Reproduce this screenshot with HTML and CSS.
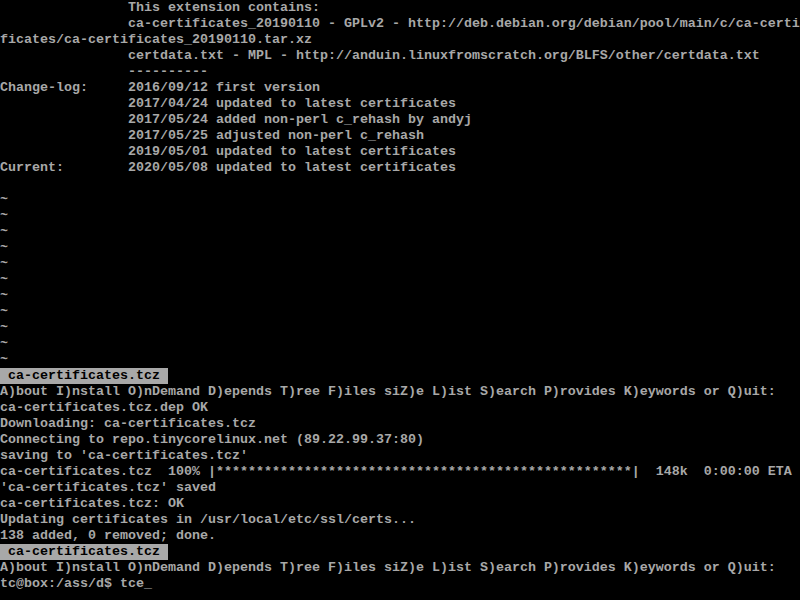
FILE: index.html
```html
<!DOCTYPE html>

<html lang="en">

<head>
  <meta charset="UTF-8">
  <meta name="viewport" content="width=device-width, initial-scale=1">

  <title>tty1</title>

  <link rel="stylesheet" href="styles.css">
</head>

<body>
  <div id="console">
    <div class="line">                This extension contains:</div>
    <div class="line">                ca-certificates_20190110 - GPLv2 - http://deb.debian.org/debian/pool/main/c/ca-certi</div>
    <div class="line">ficates/ca-certificates_20190110.tar.xz</div>
    <div class="line">                certdata.txt - MPL - http://anduin.linuxfromscratch.org/BLFS/other/certdata.txt</div>
    <div class="line">                ----------</div>
    <div class="line">Change-log:     2016/09/12 first version</div>
    <div class="line">                2017/04/24 updated to latest certificates</div>
    <div class="line">                2017/05/24 added non-perl c_rehash by andyj</div>
    <div class="line">                2017/05/25 adjusted non-perl c_rehash</div>
    <div class="line">                2019/05/01 updated to latest certificates</div>
    <div class="line">Current:        2020/05/08 updated to latest certificates</div>
    <div class="line"></div>
    <div class="line">~</div>
    <div class="line">~</div>
    <div class="line">~</div>
    <div class="line">~</div>
    <div class="line">~</div>
    <div class="line">~</div>
    <div class="line">~</div>
    <div class="line">~</div>
    <div class="line">~</div>
    <div class="line">~</div>
    <div class="line">~</div>
    <div class="line"><span class="status"> ca-certificates.tcz </span></div>
    <div class="line">A)bout I)nstall O)nDemand D)epends T)ree F)iles siZ)e L)ist S)earch P)rovides K)eywords or Q)uit:</div>
    <div class="line">ca-certificates.tcz.dep OK</div>
    <div class="line">Downloading: ca-certificates.tcz</div>
    <div class="line">Connecting to repo.tinycorelinux.net (89.22.99.37:80)</div>
    <div class="line">saving to 'ca-certificates.tcz'</div>
    <div class="line">ca-certificates.tcz  100% |****************************************************|  148k  0:00:00 ETA</div>
    <div class="line">'ca-certificates.tcz' saved</div>
    <div class="line">ca-certificates.tcz: OK</div>
    <div class="line">Updating certificates in /usr/local/etc/ssl/certs...</div>
    <div class="line">138 added, 0 removed; done.</div>
    <div class="line"><span class="status"> ca-certificates.tcz </span></div>
    <div class="line">A)bout I)nstall O)nDemand D)epends T)ree F)iles siZ)e L)ist S)earch P)rovides K)eywords or Q)uit:</div>
    <div class="line">tc@box:/ass/d$ tce<span class="cursor">_</span></div>
  </div>
</body>

</html>
```

FILE: styles.css
```css
html {
  margin: 0;
  padding: 0;
  background: #000;
}

body {
  margin: 0;
  padding: 0;
  width: 800px;
  height: 600px;
  overflow: hidden;
  background: #000;
}

#console {
  --cell-width: 8px;
  --cell-height: 16px;

  color: #a8a8a8;
  font-family: "Liberation Mono", "DejaVu Sans Mono", monospace;
  font-size: 13.3333px;
  font-weight: bold;

  .line {
    height: var(--cell-height);
    line-height: var(--cell-height);
    white-space: pre;
    overflow: hidden;
  }

  .status {
    display: inline-block;
    height: var(--cell-height);
    background: #a8a8a8;
    color: #000;
  }
}
```
